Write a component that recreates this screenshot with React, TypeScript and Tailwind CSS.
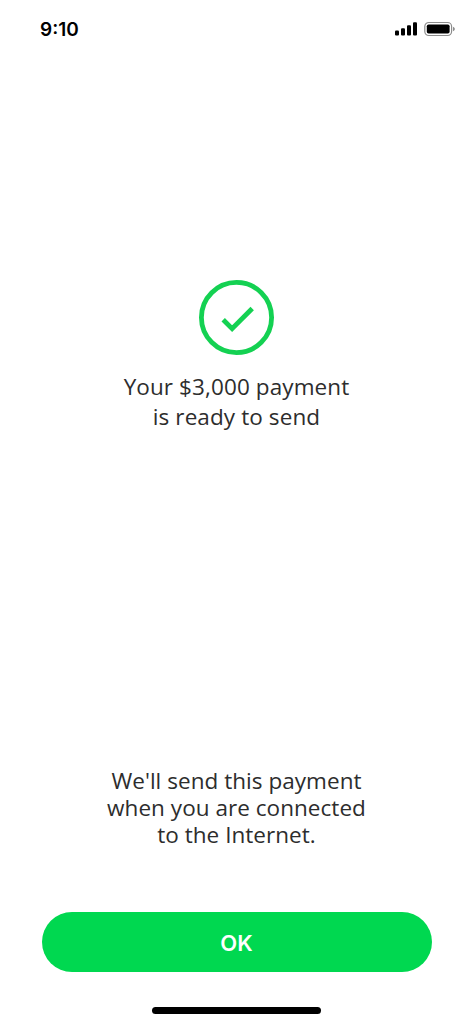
/** Signal strength bars and battery shown on the right of the status bar. */
function StatusIcons() {
  return (
    <svg width="62" height="16" viewBox="0 0 62 16" fill="none">
      <rect x="1" y="9.6" width="4" height="5" rx="1.1" fill="#000" />
      <rect x="7" y="7.2" width="4" height="7.4" rx="1.1" fill="#000" />
      <rect x="13" y="4.2" width="4" height="10.4" rx="1.1" fill="#000" />
      <rect x="19" y="1.2" width="4" height="13.4" rx="1.1" fill="#000" />
      <rect x="30.8" y="1.5" width="26.8" height="13" rx="4" stroke="#8c8c8c" strokeWidth="1.2" />
      <rect x="32.8" y="3.4" width="22.8" height="9.2" rx="1.8" fill="#000" />
      <path d="M59 5.8c1.2.5 1.8 1.2 1.8 2.2s-.6 1.7-1.8 2.2z" fill="#8c8c8c" />
    </svg>
  );
}

function CheckCircle() {
  return (
    <svg width="75" height="75" viewBox="0 0 75 75" fill="none" stroke="#14d152">
      <circle cx="37.5" cy="37.5" r="35.1" strokeWidth="4.8" />
      <path d="M24.2 39.7l8.9 8.9L53.2 28.5" strokeWidth="4.8" />
    </svg>
  );
}

export default function App() {
  return (
    <div className="flex h-[1024px] w-[473px] flex-col overflow-hidden bg-white font-['Open_Sans',sans-serif] text-[#2d2d2d]">
      <header className="flex h-[58px] items-center justify-between pl-10 pr-[17px] text-black">
        <span className="pt-0.5 font-['Inter',sans-serif] text-[19px] font-semibold leading-6">9:10</span>
        <StatusIcons />
      </header>

      <main className="flex flex-1 flex-col items-center pt-[222px] text-center">
        <CheckCircle />
        <h1 className="mt-[17px] text-[22.5px] font-normal leading-[30px] tracking-[0.1px]">
          Your $3,000 payment
          <br />
          is ready to send
        </h1>
      </main>

      <footer className="flex flex-col items-center pb-2.5 text-center">
        <p className="text-[22.5px] leading-[27px] tracking-[0.04px]">
          We&apos;ll send this payment
          <br />
          when you are connected
          <br />
          to the Internet.
        </p>
        <button
          type="button"
          className="mt-16 h-[60px] w-[390px] rounded-full bg-[#00d850] pt-0.5 font-['Inter',sans-serif] text-[22px] font-semibold text-white"
        >
          OK
        </button>
        <div className="mt-[35px] h-[7px] w-[169px] rounded-full bg-black" />
      </footer>
    </div>
  );
}
